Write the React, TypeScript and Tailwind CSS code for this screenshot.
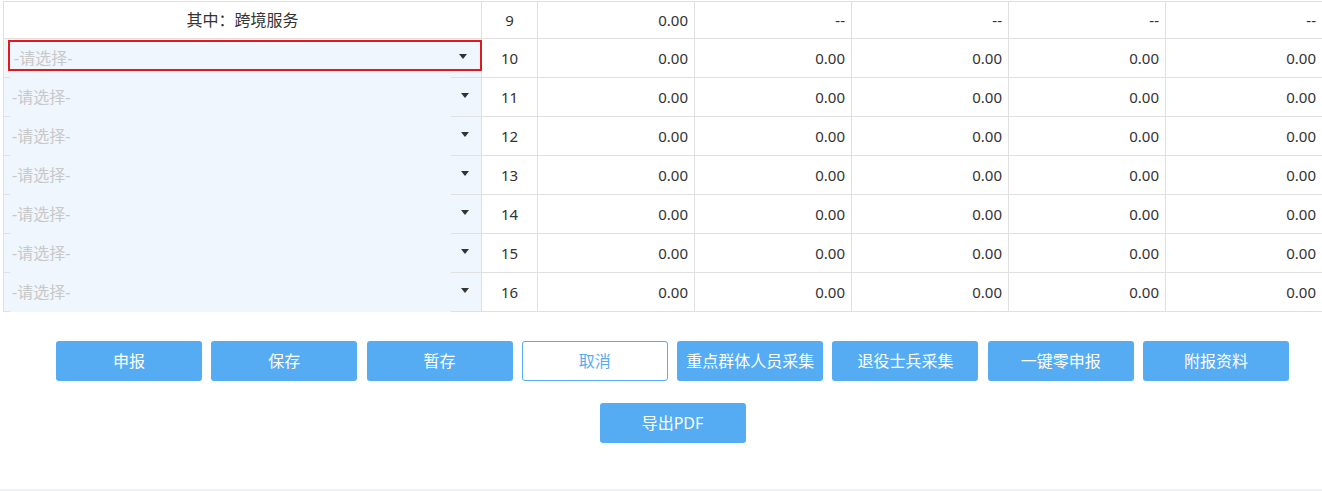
import React from "react";

const font = { fontFamily: '"Microsoft YaHei", "Noto Sans", "Noto Sans CJK SC", sans-serif' };

function Caret() {
  return (
    <svg width="8" height="5" viewBox="0 0 8 5" className="block translate-y-[1px]">
      <path d="M0 0 L8 0 L4 5 Z" fill="#333" />
    </svg>
  );
}

function SelectCell({ active }: { active?: boolean }) {
  return (
    <div className="relative h-full border-r border-b border-[#e0e0e0] bg-[#eff6fe]">
      <div
        className={
          "absolute left-[4px] right-[-1px] top-[1px] bottom-[6px] flex items-center justify-between pl-[4px] pr-[13px] " +
          (active ? "border-2 border-[#e0191f] " : "")
        }
      >
        <span className="text-[16px] text-[#c8c8c8] translate-y-[2px]">-请选择-</span>
        <Caret />
      </div>
      <div className="absolute left-[6px] right-[30px] bottom-[-1px] h-[2px] bg-[#eff6fe]" />
    </div>
  );
}

function Cell({
  children,
  align = "right",
  big,
}: {
  children: React.ReactNode;
  align?: "right" | "center";
  big?: boolean;
}) {
  return (
    <div
      className={
        "h-full border-r border-b border-[#e0e0e0] flex items-center text-[#333] " +
        (big ? "text-[16px] " : "text-[15px] ") +
        (align === "right" ? "justify-end pr-[6px]" : "justify-center")
      }
    >
      {children}
    </div>
  );
}

function Btn({ children, outline }: { children: React.ReactNode; outline?: boolean }) {
  return (
    <button
      className={
        "w-[146px] h-[40px] rounded-[3px] text-[16px] flex items-center justify-center " +
        (outline
          ? "bg-white border border-[#56acf3] text-[#56acf3]"
          : "bg-[#56acf3] text-white")
      }
    >
      {children}
    </button>
  );
}

export default function App() {
  const rows = [10, 11, 12, 13, 14, 15, 16];
  return (
    <div className="w-[1322px] h-[491px] overflow-hidden bg-white relative" style={font}>
      <div className="h-[489px] bg-white">
        <div className="pt-px pl-[3px] overflow-hidden">
          <div className="w-[1320px] border-l border-t border-[#e0e0e0] grid grid-cols-[478px_56px_157px_157px_157px_157px_157px] grid-rows-[37px_repeat(7,39px)]">
            <Cell align="center" big>
              其中：跨境服务
            </Cell>
            <Cell align="center">9</Cell>
            <Cell>0.00</Cell>
            <Cell>--</Cell>
            <Cell>--</Cell>
            <Cell>--</Cell>
            <Cell>--</Cell>
            {rows.map((n) => (
              <React.Fragment key={n}>
                <SelectCell active={n === 10} />
                <Cell align="center">{n}</Cell>
                <Cell>0.00</Cell>
                <Cell>0.00</Cell>
                <Cell>0.00</Cell>
                <Cell>0.00</Cell>
                <Cell>0.00</Cell>
              </React.Fragment>
            ))}
          </div>
        </div>
        <div className="pl-[23px] mt-[29px] flex flex-col items-center gap-[22px]">
          <div className="flex gap-[9.3px]">
            <Btn>申报</Btn>
            <Btn>保存</Btn>
            <Btn>暂存</Btn>
            <Btn outline>取消</Btn>
            <Btn>重点群体人员采集</Btn>
            <Btn>退役士兵采集</Btn>
            <Btn>一键零申报</Btn>
            <Btn>附报资料</Btn>
          </div>
          <Btn>导出PDF</Btn>
        </div>
      </div>
      <div className="h-[2px] bg-[#f0f1f5]" />
    </div>
  );
}
